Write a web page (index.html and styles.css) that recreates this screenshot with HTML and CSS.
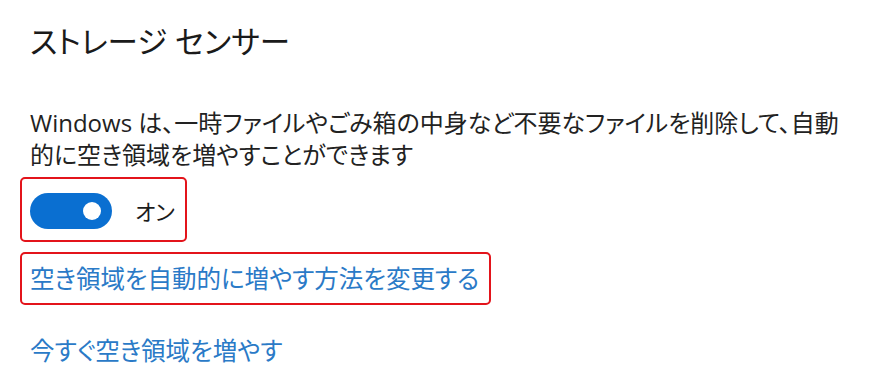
FILE: index.html
```html
<!DOCTYPE html>
<html lang="ja">
<head>
<meta charset="utf-8">
<title>ストレージ センサー</title>
<link rel="stylesheet" href="styles.css">
</head>
<body>
<main class="page">
  <h1 class="title">ストレージ センサー</h1>
  <p class="desc">Windows は、一時ファイルやごみ箱の中身など不要なファイルを削除して、自動的に空き領域を増やすことができます</p>
  <div class="toggle-box">
    <span class="toggle" role="switch" aria-checked="true"><span class="knob"></span></span>
    <span class="toggle-label">オン</span>
  </div>
  <div class="link-box">
    <a class="link" href="#">空き領域を自動的に増やす方法を変更する</a>
  </div>
  <a class="link link-now" href="#">今すぐ空き領域を増やす</a>
</main>
</body>
</html>
```

FILE: styles.css
```css
html, body {
  margin: 0;
  padding: 0;
  background: #ffffff;
}

body {
  font-family: "Open Sans", "Noto Sans CJK JP", sans-serif;
  font-feature-settings: "palt";
  color: #1c1c1c;
}

.page {
  display: flex;
  flex-direction: column;
  align-items: flex-start;
  padding: 19px 0 0 20px;
}

.title {
  margin: 0 0 0 10px;
  font-size: 30.5px;
  font-weight: 400;
  line-height: 44px;
  color: #1a1a1a;
}

.desc {
  margin: 44px 0 0 10px;
  width: 822px;
  font-size: 24px;
  line-height: 32px;
  color: #222222;
}

.toggle-box {
  display: flex;
  align-items: center;
  gap: 23px;
  box-sizing: border-box;
  height: 65px;
  margin-top: 6px;
  padding: 2px 10px 0 8px;
  border: 2px solid #e3141b;
  border-radius: 5px;
}

.toggle {
  position: relative;
  display: block;
  width: 82px;
  height: 36px;
  border-radius: 18px;
  background: #0a6fd1;
}

.knob {
  position: absolute;
  right: 11px;
  top: 9px;
  width: 18px;
  height: 18px;
  border-radius: 50%;
  background: #ffffff;
}

.toggle-label {
  font-size: 22px;
  line-height: 32px;
  color: #1c1c1c;
}

.link-box {
  display: flex;
  align-items: center;
  box-sizing: border-box;
  height: 53px;
  margin-top: 10px;
  padding: 0 10px 0 8px;
  border: 2px solid #e3141b;
  border-radius: 5px;
}

.link {
  font-size: 24.5px;
  line-height: 32px;
  color: #2a7ac7;
  text-decoration: none;
}

.link-now {
  margin: 30px 0 0 10px;
}
```
